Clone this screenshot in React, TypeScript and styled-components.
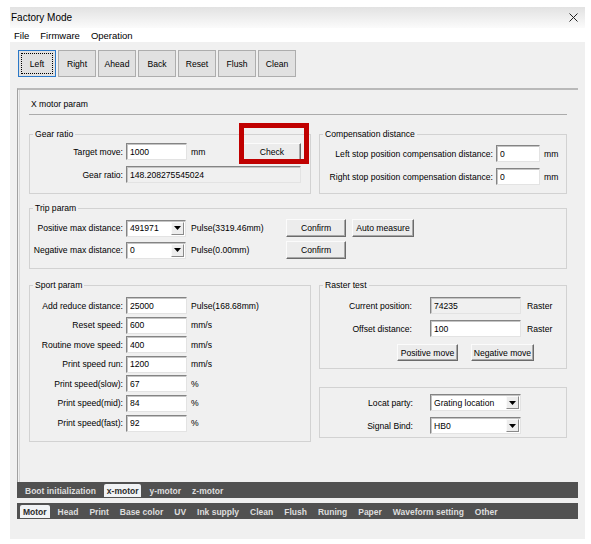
import React from "react";
import styled, { createGlobalStyle } from "styled-components";

const GlobalStyle = createGlobalStyle`
  html, body {
    margin: 0;
    padding: 0;
    background: #ffffff;
  }
  body {
    font-family: "Liberation Sans", Arial, sans-serif;
    color: #000;
  }
  * {
    box-sizing: border-box;
  }
`;

const toolButtons = ["Left", "Right", "Ahead", "Back", "Reset", "Flush", "Clean"];

const sportRows = [
    { label: "Add reduce distance:", value: "25000", unit: "Pulse(168.68mm)" },
    { label: "Reset speed:", value: "600", unit: "mm/s" },
    { label: "Routine move speed:", value: "400", unit: "mm/s" },
    { label: "Print speed run:", value: "1200", unit: "mm/s" },
    { label: "Print speed(slow):", value: "67", unit: "%" },
    { label: "Print speed(mid):", value: "84", unit: "%" },
    { label: "Print speed(fast):", value: "92", unit: "%" },
];

const motorTabs = ["Boot initialization", "x-motor", "y-motor", "z-motor"];
const pageTabs = ["Motor", "Head", "Print", "Base color", "UV", "Ink supply", "Clean", "Flush", "Runing", "Paper", "Waveform setting", "Other"];

function Combo(props: { value: string; width: number }) {
    return (
        <ComboBox $w={props.width}>
            <ComboValue>{props.value}</ComboValue>
            <ComboArrow>
                <svg width="7" height="4" viewBox="0 0 7 4">
                    <polygon points="0,0 7,0 3.5,4" fill="#000" />
                </svg>
            </ComboArrow>
        </ComboBox>
    );
}

export default function App() {
    return (
        <Screen>
            <GlobalStyle />
            <Window>
                <TitleBar>
                    <span>Factory Mode</span>
                    <svg width="9" height="9" viewBox="0 0 9 9">
                        <path d="M0.5 0.5 L8.5 8.5 M8.5 0.5 L0.5 8.5" stroke="#222" strokeWidth="1" />
                    </svg>
                </TitleBar>
                <MenuBar>
                    <span>File</span>
                    <span>Firmware</span>
                    <span>Operation</span>
                </MenuBar>
                <Body>
                    <Toolbar>
                        {toolButtons.map((b, i) => (
                            <ToolButton key={b} $focused={i === 0}>{b}</ToolButton>
                        ))}
                    </Toolbar>

                    <Panel>
                        <PanelHeader>X motor param</PanelHeader>

                        <TopRow>
                            <Group $w={282}>
                                <Legend>Gear ratio</Legend>
                                <GroupBody $pad="3px 9px 10px 0">
                                    <Field>
                                        <Label $w={93}>Target move:</Label>
                                        <TextBox $w={61} defaultValue="1000" />
                                        <Unit>mm</Unit>
                                        <CheckWrap>
                                            <Btn $w={58} $h={18}>Check</Btn>
                                            <Highlight />
                                        </CheckWrap>
                                    </Field>
                                    <Field>
                                        <Label $w={93}>Gear ratio:</Label>
                                        <TextBox $grow $readOnly readOnly defaultValue="148.208275545024" />
                                    </Field>
                                </GroupBody>
                            </Group>

                            <Group $w={248}>
                                <Legend>Compensation distance</Legend>
                                <GroupBody $pad="5px 0 8px 0">
                                    <Field>
                                        <Label $w={173}>Left stop position compensation distance:</Label>
                                        <TextBox $w={44} defaultValue="0" />
                                        <Unit>mm</Unit>
                                    </Field>
                                    <Field>
                                        <Label $w={173}>Right stop position compensation distance:</Label>
                                        <TextBox $w={44} defaultValue="0" />
                                        <Unit>mm</Unit>
                                    </Field>
                                </GroupBody>
                            </Group>
                        </TopRow>

                        <TripGroup>
                            <Legend>Trip param</Legend>
                            <GroupBody $pad="5px 0 9px 0" $gap={4}>
                                <Field $h={18}>
                                    <Label $w={93}>Positive max distance:</Label>
                                    <Combo value="491971" width={60} />
                                    <Unit $w={95} $ml={5}>Pulse(3319.46mm)</Unit>
                                    <Btn $w={60} $h={18}>Confirm</Btn>
                                    <Btn $w={62} $h={18} $ml={6}>Auto measure</Btn>
                                </Field>
                                <Field $h={18}>
                                    <Label $w={93}>Negative max distance:</Label>
                                    <Combo value="0" width={60} />
                                    <Unit $w={95} $ml={5}>Pulse(0.00mm)</Unit>
                                    <Btn $w={60} $h={18}>Confirm</Btn>
                                </Field>
                            </GroupBody>
                        </TripGroup>

                        <BottomRow>
                            <Group $w={282}>
                                <Legend>Sport param</Legend>
                                <GroupBody $pad="6px 0 9px 0" $gap={2.6}>
                                    {sportRows.map((r) => (
                                        <Field key={r.label}>
                                            <Label $w={93}>{r.label}</Label>
                                            <TextBox $w={61} defaultValue={r.value} />
                                            <Unit>{r.unit}</Unit>
                                        </Field>
                                    ))}
                                </GroupBody>
                            </Group>

                            <RightColumn>
                                <Group $w={248}>
                                    <Legend>Raster test</Legend>
                                    <GroupBody $pad="6px 0 7px 0">
                                        <Field>
                                            <Label $w={92} $mr={18}>Current position:</Label>
                                            <TextBox $w={91} $readOnly readOnly defaultValue="74235" />
                                            <Unit $ml={6}>Raster</Unit>
                                        </Field>
                                        <Field>
                                            <Label $w={92} $mr={18}>Offset distance:</Label>
                                            <TextBox $w={91} defaultValue="100" />
                                            <Unit $ml={6}>Raster</Unit>
                                        </Field>
                                        <ButtonRow>
                                            <Btn $w={61} $h={17}>Positive move</Btn>
                                            <Btn $w={63} $h={17}>Negative move</Btn>
                                        </ButtonRow>
                                    </GroupBody>
                                </Group>

                                <PlainGroup>
                                    <GroupBody $pad="6px 0 3px 0">
                                        <Field>
                                            <Label $w={93} $mr={17}>Locat party:</Label>
                                            <Combo value="Grating location" width={91} />
                                        </Field>
                                        <Field>
                                            <Label $w={93} $mr={17}>Signal Bind:</Label>
                                            <Combo value="HB0" width={91} />
                                        </Field>
                                    </GroupBody>
                                </PlainGroup>
                            </RightColumn>
                        </BottomRow>
                    </Panel>

                    <TabStrip $pl={5}>
                        {motorTabs.map((t, i) => (
                            <Tab key={t} $active={i === 1}>{t}</Tab>
                        ))}
                    </TabStrip>
                    <TabStrip $pl={3} $mt={5}>
                        {pageTabs.map((t, i) => (
                            <Tab key={t} $active={i === 0}>{t}</Tab>
                        ))}
                    </TabStrip>
                </Body>
            </Window>
        </Screen>
    );
}

const Screen = styled.div`
    width: 591px;
    height: 544px;
    padding: 7px 0 0 10px;
    background: #ffffff;
    overflow: hidden;
`

const Window = styled.div`
    width: 575px;
    display: flex;
    flex-direction: column;
`

const TitleBar = styled.div`
    height: 21px;
    display: flex;
    align-items: center;
    justify-content: space-between;
    padding: 0 7px 0 1px;
    background: linear-gradient(#e2e2e2, #fbfbfb);
    font-size: 10px;
`

const MenuBar = styled.div`
    height: 14px;
    display: flex;
    align-items: center;
    gap: 11px;
    padding-left: 4px;
    background: #ffffff;
    font-size: 9.5px;
`

const Body = styled.div`
    height: 497px;
    background: #f0f0f0;
    padding: 8px 0 0 7px;
    display: flex;
    flex-direction: column;
`

const Toolbar = styled.div`
    display: flex;
    gap: 2px;
    height: 27px;
    margin-left: 1px;
`

const ToolButton = styled.div<{ $focused?: boolean }>`
    width: 38px;
    height: 27px;
    display: flex;
    align-items: center;
    justify-content: center;
    font-size: 8.6px;
    background: #e1e1e1;
    border: 1px solid ${(p) => (p.$focused ? "#2a78c8" : "#adadad")};
    outline: ${(p) => (p.$focused ? "1px dotted #000" : "none")};
    outline-offset: -4px;
`

const Panel = styled.div`
    width: 561px;
    height: 394px;
    margin-top: 11px;
    padding: 0 11px 0 11px;
    border-top: 2px solid #b9b9b9;
    border-left: 1px solid #a0a0a0;
    box-shadow: inset 1px 0 0 #f0f0f0, inset 2px 0 0 #d6d6d6;
    display: flex;
    flex-direction: column;
`

const PanelHeader = styled.div`
    padding: 8px 0 4px 2px;
    line-height: 12px;
    font-size: 8.6px;
    border-bottom: 1px solid #ababab;
`

const TopRow = styled.div`
    display: flex;
    gap: 8px;
    margin-top: 13px;
`

const BottomRow = styled.div`
    display: flex;
    align-items: flex-start;
    gap: 8px;
    margin-top: 10px;
`

const RightColumn = styled.div`
    display: flex;
    flex-direction: column;
    gap: 18px;
`

const Group = styled.fieldset<{ $w?: number }>`
    margin: 0;
    padding: 0;
    min-width: 0;
    width: ${(p) => (p.$w ? p.$w + "px" : "auto")};
    border: 1px solid #d2d2d2;
`

const TripGroup = styled(Group)`
    margin-top: 8px;
`

const PlainGroup = styled(Group)`
    width: 248px;
`

const Legend = styled.legend`
    margin-left: 3px;
    padding: 0 2px;
    font-size: 8.6px;
    line-height: 12px;
`

const GroupBody = styled.div<{ $pad: string; $gap?: number }>`
    display: flex;
    flex-direction: column;
    gap: ${(p) => (p.$gap ?? 6) + "px"};
    padding: ${(p) => p.$pad};
`

const Field = styled.div<{ $h?: number }>`
    display: flex;
    align-items: center;
    height: ${(p) => (p.$h ?? 17) + "px"};
    font-size: 8.6px;
`

const Label = styled.span<{ $w: number; $mr?: number }>`
    width: ${(p) => p.$w}px;
    margin-right: ${(p) => (p.$mr ?? 3) + "px"};
    text-align: right;
    white-space: nowrap;
`

const Unit = styled.span<{ $w?: number; $ml?: number }>`
    margin-left: ${(p) => (p.$ml ?? 4) + "px"};
    width: ${(p) => (p.$w ? p.$w + "px" : "auto")};
    white-space: nowrap;
`

const TextBox = styled.input<{ $w?: number; $grow?: boolean; $readOnly?: boolean }>`
    width: ${(p) => (p.$w ? p.$w + "px" : "auto")};
    flex: ${(p) => (p.$grow ? "1" : "none")};
    min-width: 0;
    height: 17px;
    margin: 0;
    padding: 0 3px;
    font-family: "Liberation Sans", Arial, sans-serif;
    font-size: 8.6px;
    color: #000;
    background: ${(p) => (p.$readOnly ? "#f0f0f0" : "#ffffff")};
    border: 1px solid;
    border-color: #848484 #e3e3e3 #e3e3e3 #848484;
    box-shadow: inset 1px 1px 0 #c4c4c4;
    outline: none;
`

const ComboBox = styled.div<{ $w: number }>`
    width: ${(p) => p.$w}px;
    height: 17px;
    display: flex;
    align-items: stretch;
    background: #ffffff;
    border: 1px solid;
    border-color: #848484 #e3e3e3 #e3e3e3 #848484;
    box-shadow: inset 1px 1px 0 #c4c4c4;
`

const ComboValue = styled.span`
    flex: 1;
    padding-left: 3px;
    display: flex;
    align-items: center;
    font-size: 8.6px;
    white-space: nowrap;
    overflow: hidden;
`

const ComboArrow = styled.span`
    width: 13px;
    margin: 1px 1px 1px 0;
    display: flex;
    align-items: center;
    justify-content: center;
    background: #ededed;
    border: 1px solid;
    border-color: #fafafa #8a8a8a #8a8a8a #fafafa;
`

const Btn = styled.div<{ $w: number; $h: number; $ml?: number }>`
    width: ${(p) => p.$w}px;
    height: ${(p) => p.$h}px;
    margin-left: ${(p) => (p.$ml ?? 0) + "px"};
    display: flex;
    align-items: center;
    justify-content: center;
    font-size: 8.6px;
    white-space: nowrap;
    background: #ececec;
    border: 1px solid;
    border-color: #fbfbfb #6b6b6b #6b6b6b #fbfbfb;
    box-shadow: inset -1px -1px 0 #a8a8a8;
`

const CheckWrap = styled.div`
    position: relative;
    margin-left: auto;
`

const Highlight = styled.div`
    position: absolute;
    top: -20px;
    left: -4px;
    right: -8px;
    bottom: -3px;
    border: 5px solid #c00000;
    pointer-events: none;
`

const ButtonRow = styled.div`
    display: flex;
    gap: 13px;
    margin-top: 1px;
    padding-left: 77px;
`

const TabStrip = styled.div<{ $pl: number; $mt?: number }>`
    width: 561px;
    height: 16px;
    margin-top: ${(p) => (p.$mt ?? 0) + "px"};
    padding-left: ${(p) => p.$pl}px;
    display: flex;
    align-items: flex-end;
    gap: 5px;
    background: #515151;
`

const Tab = styled.span<{ $active?: boolean }>`
    height: 13px;
    margin-bottom: 1px;
    padding: 0 3px;
    display: flex;
    align-items: center;
    font-size: 8.5px;
    font-weight: bold;
    white-space: nowrap;
    color: ${(p) => (p.$active ? "#2b2b2b" : "#dedede")};
    background: ${(p) => (p.$active ? "#f1f3f5" : "transparent")};
    border-radius: 2px 2px 0 0;
`
